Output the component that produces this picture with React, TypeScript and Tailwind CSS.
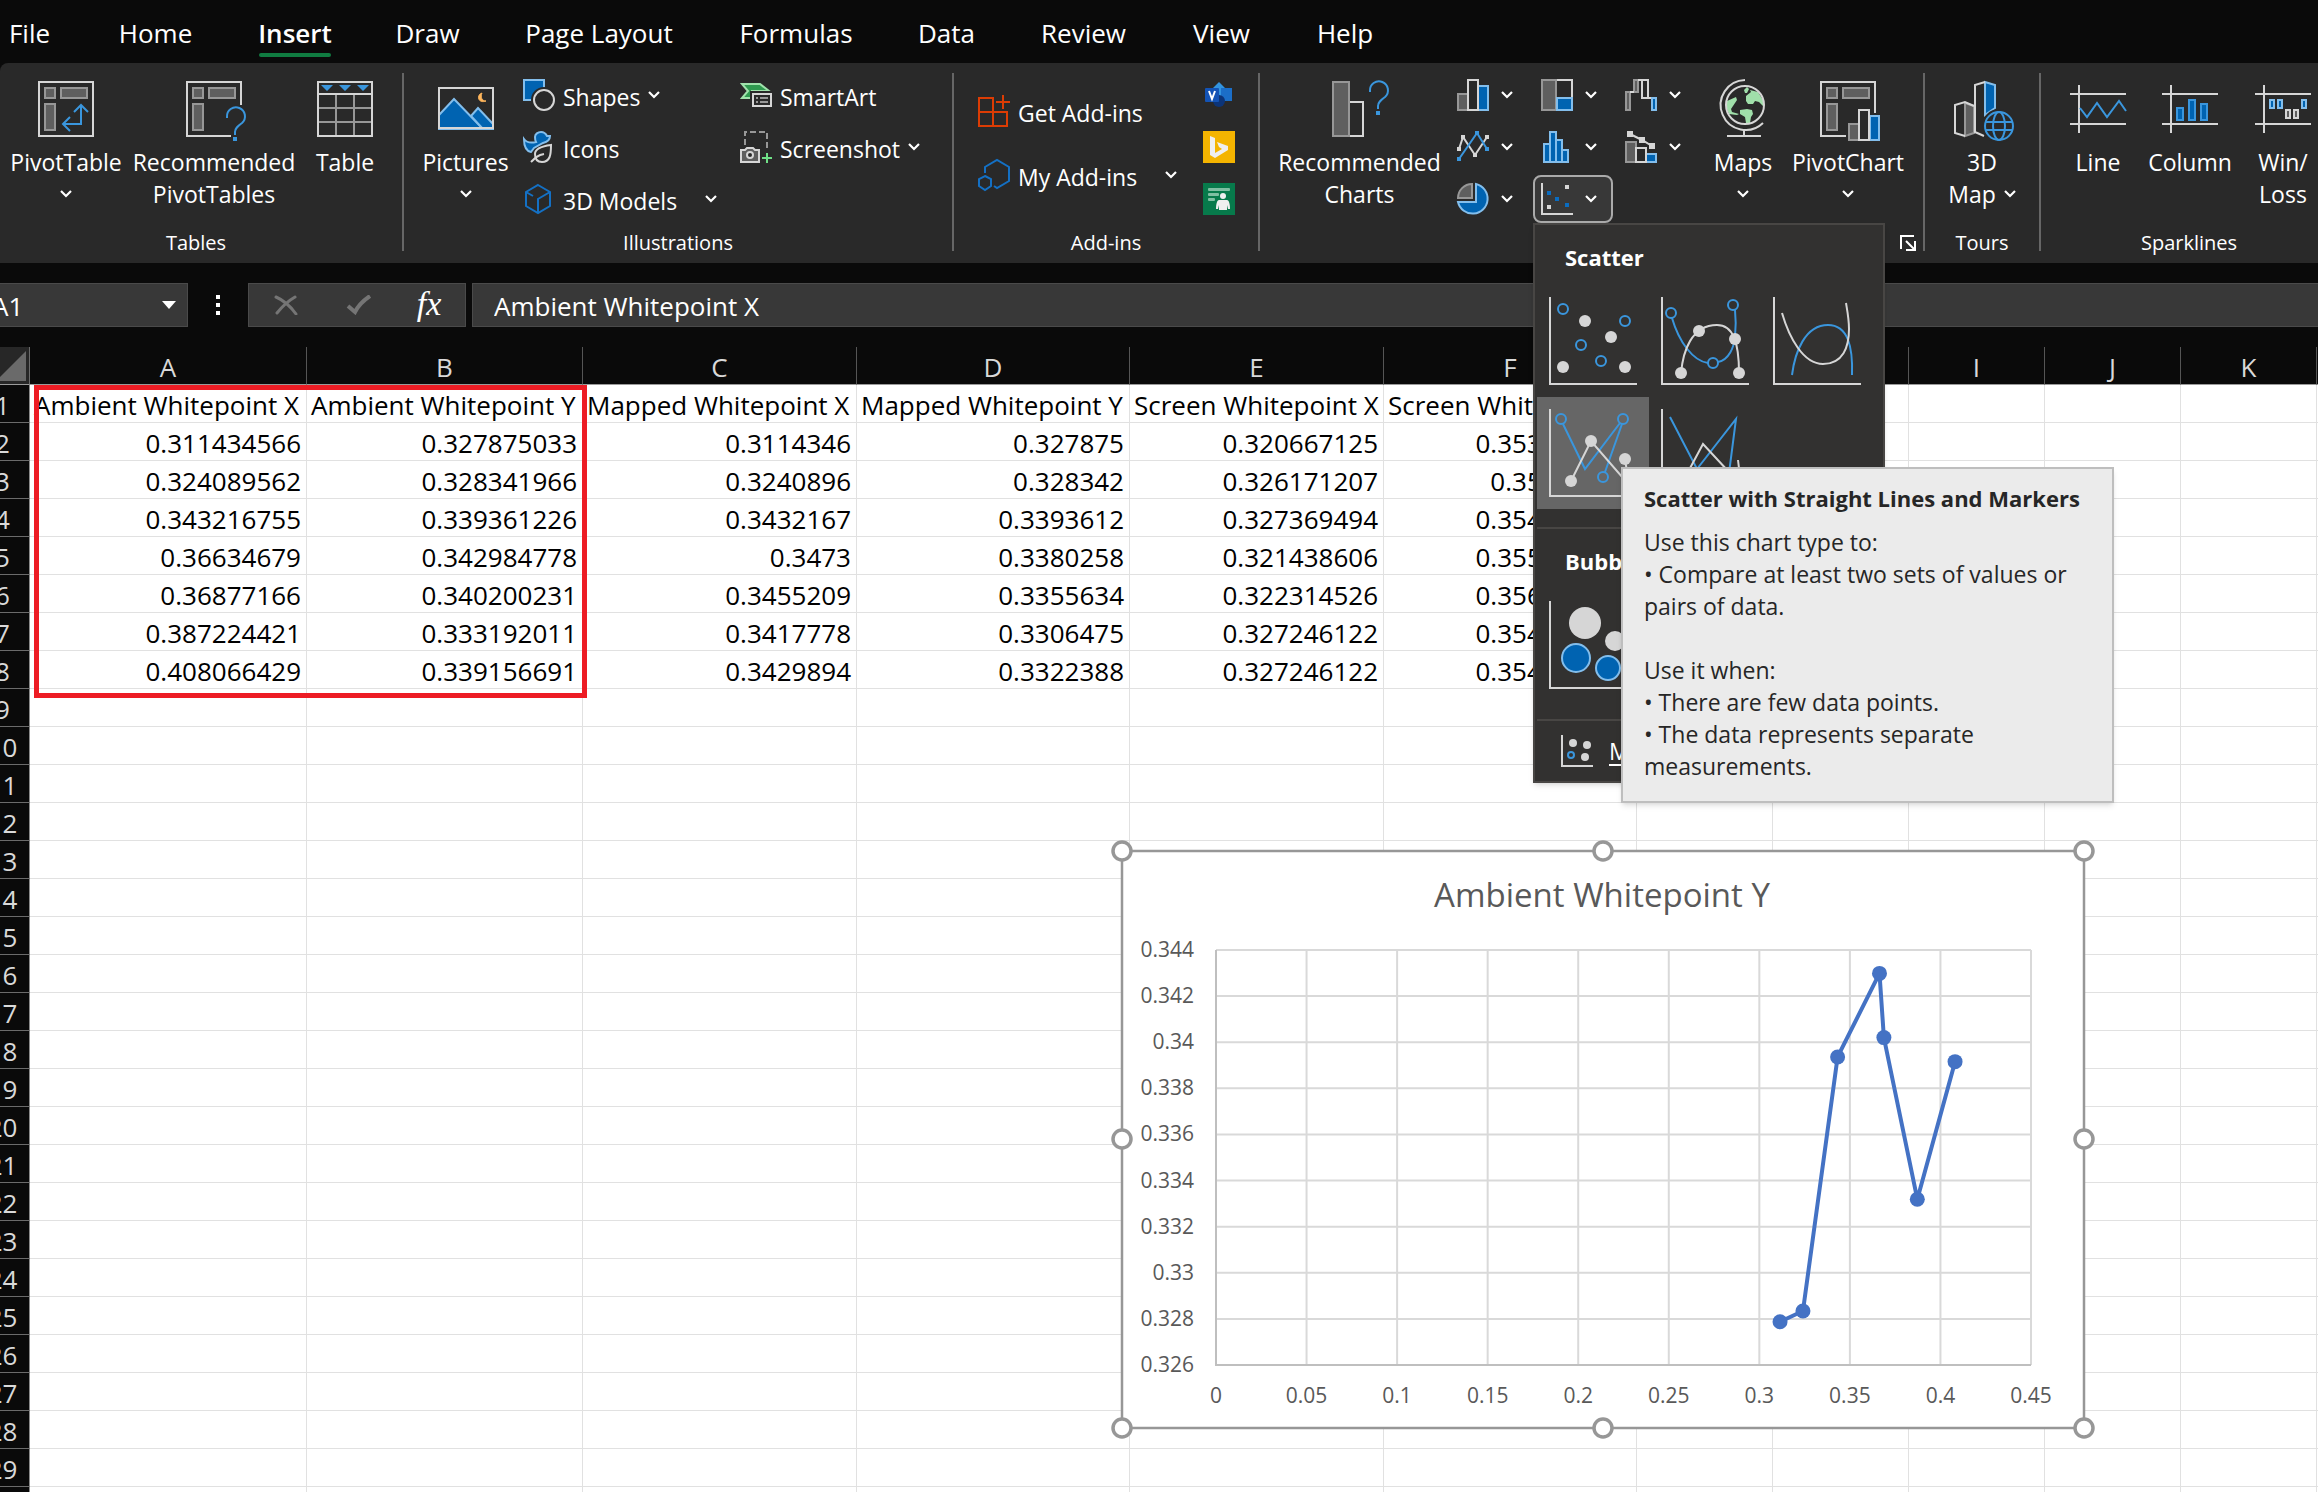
import React from "react";

const LIGHT = "#d6d6d6";
const GRAY = "#979797";
const GRAY_FILL = "#5f5f5f";
const BLUE = "#0063b1";
const PALE = "#83beec";
const MID = "#3a96dd";
const DEEP = "#1470c4";

/* ---------- helpers ---------- */

function Box({ x, y, w, h, s = LIGHT, f = "none" }: { x: number; y: number; w: number; h: number; s?: string; f?: string }) {
  return <rect x={x + 1} y={y + 1} width={w - 2} height={h - 2} stroke={s} fill={f} strokeWidth={2} />;
}

function Chevron({ className = "" }: { className?: string }) {
  return (
    <svg className={"h-2 w-3 shrink-0 " + className} viewBox="0 0 12 8" fill="none" stroke="#fff" strokeWidth={2.2}>
      <path d="M1 1l5 5 5-5" />
    </svg>
  );
}

function Big({ children }: { children: React.ReactNode }) {
  return (
    <svg className="h-[60px] w-14 shrink-0 overflow-visible" viewBox="0 0 56 60" fill="none" stroke={LIGHT} strokeWidth={2}>
      {children}
    </svg>
  );
}

function Small({ children }: { children: React.ReactNode }) {
  return (
    <svg className="h-8 w-8 shrink-0 overflow-visible" viewBox="0 0 32 32" fill="none" stroke={LIGHT} strokeWidth={2}>
      {children}
    </svg>
  );
}

function Question({ x, y }: { x: number; y: number }) {
  return (
    <g transform={`translate(${x} ${y})`}>
      <path d="M1 11V10A9 9 0 1 1 16 16C12 19 9 21 9 25V28" stroke={MID} />
      <rect x={7} y={30} width={4} height={4} fill={MID} stroke="none" />
    </g>
  );
}

/* ---------- large ribbon icons ---------- */

const pivotInner = (
  <>
    <Box x={6} y={6} w={12} h={12} s={GRAY} f={GRAY_FILL} />
    <Box x={22} y={6} w={28} h={12} s={GRAY} f={GRAY_FILL} />
    <Box x={6} y={22} w={12} h={28} s={GRAY} f={GRAY_FILL} />
  </>
);

const icons = {
  pivot: (
    <Big>
      <Box x={0} y={0} w={56} h={56} />
      {pivotInner}
      <path d="M43 24V43H26M36 31l7-7 7 7M32 36l-7 7 7 7" stroke={MID} />
    </Big>
  ),
  recPivot: (
    <Big>
      <path d="M55 24V1H1V55H45" />
      {pivotInner}
      <Question x={40} y={26} />
    </Big>
  ),
  table: (
    <Big>
      <path d="M19 14V55M37 14V55M1 27H55M1 41H55" stroke={GRAY} />
      <Box x={0} y={0} w={56} h={56} />
      <path d="M1 13H55" />
      <path d="M4 4H16L10 10ZM22 4H34L28 10ZM40 4H52L46 10Z" fill={MID} stroke="none" />
    </Big>
  ),
  pictures: (
    <Big>
      <path d="M1 34L16 18 45 48H1Z" fill={BLUE} stroke={PALE} />
      <path d="M33 35L40 27 55 43V48H45Z" fill={BLUE} stroke={PALE} />
      <Box x={0} y={6} w={56} h={42} />
      <path d="M44 12C38 14 40 23 48 20C44 20 42 16 44 12Z" fill="#ffb65c" stroke="#ffb65c" strokeWidth={1} />
    </Big>
  ),
  recCharts: (
    <Big>
      <Box x={16} y={20} w={16} h={36} />
      <Box x={0} y={0} w={18} h={56} s={GRAY} f={GRAY_FILL} />
      <Question x={37} y={0} />
    </Big>
  ),
  globe: (
    <Big>
      <g fill="#a0dfaa" stroke="none">
        <path d="M29 9L32 6 34 8 32 12 30 12Z" />
        <path d="M31 15L36 11 35 9 43 11 48 19 49 26 44 21 40 20 38 23 33 23 31 20Z" />
        <path d="M12 20L21 16 22 19 20 22 18 25 16 28 17 31 24 33 22 34 14 33 11 26Z" />
        <path d="M25 29L32 28 37 29 38 33 36 36 35 42 31 42 30 36 25 33Z" />
      </g>
      <circle cx={30} cy={24} r={19} />
      <path d="M30 -1A25 25 0 1 0 48 42M29 50V55M12 55H46" />
    </Big>
  ),
  pivotChart: (
    <Big>
      <path d="M55 32V1H1V55H26" />
      {pivotInner}
      <Box x={28} y={42} w={12} h={18} s={GRAY} f={GRAY_FILL} />
      <Box x={49} y={34} w={11} h={26} s={PALE} f={BLUE} />
      <Box x={38} y={28} w={12} h={32} f="#292929" />
    </Big>
  ),
  map3d: (
    <Big>
      <path d="M11 22L20 25V52L11 55Z" fill={GRAY_FILL} stroke={GRAY} />
      <path d="M20 25L11 21 1 24V52L11 55" />
      <path d="M31 1L41 4V27L31 34Z" fill={BLUE} stroke={PALE} />
      <path d="M31 1L21 4V51L30 55" />
      <g stroke={MID}>
        <circle cx={45} cy={45} r={17} fill="#292929" stroke="none" />
        <circle cx={45} cy={45} r={14} />
        <ellipse cx={45} cy={45} rx={6} ry={14} />
        <path d="M32 41H58M32 49H58" />
      </g>
    </Big>
  ),
  line: (
    <Big>
      <path d="M0 13H56M0 43H56M9 4V52" />
      <path d="M10 27L17 36 27 22 37 36 49 20 56 30" stroke={MID} />
    </Big>
  ),
  column: (
    <Big>
      <path d="M0 13H56M0 43H56M9 4V52" />
      <Box x={14} y={26} w={8} h={14} s={MID} f={BLUE} />
      <Box x={26} y={18} w={8} h={22} s={MID} f={BLUE} />
      <Box x={38} y={22} w={8} h={18} s={MID} f={BLUE} />
    </Big>
  ),
  winLoss: (
    <Big>
      <path d="M0 13H56M0 43H56M9 4V52" />
      <Box x={14} y={18} w={6} h={10} s={PALE} f={BLUE} />
      <Box x={22} y={18} w={6} h={10} s={PALE} f={BLUE} />
      <Box x={46} y={18} w={6} h={10} s={PALE} f={BLUE} />
      <Box x={30} y={28} w={6} h={10} f={GRAY_FILL} />
      <Box x={38} y={28} w={6} h={10} f={GRAY_FILL} />
    </Big>
  ),

  /* ---------- small ribbon icons ---------- */
  shapes: (
    <Small>
      <Box x={0} y={0} w={22} h={22} s={PALE} f={BLUE} />
      <circle cx={21} cy={21} r={13} fill="#292929" stroke="none" />
      <circle cx={21} cy={21} r={10} />
    </Small>
  ),
  duck: (
    <Small>
      <path d="M1 8C4 12 9 12 13 11C12 9 12 8 12 6C12 3 15 1 18 1C21 1 23 3 24 5L27 5C27 9 24 11 20 12L11 17 8 21C3 20 1 15 1 8Z" fill={BLUE} stroke={PALE} />
      <path d="M28 14C20 15 12 17 12 23C12 28 14 31 19 31C27 31 28 24 28 14Z" fill="#292929" />
      <path d="M8 31C12 27 15 24 21 23" />
    </Small>
  ),
  cube: (
    <Small>
      <path d="M15 2L27 9V23L15 30 3 23V9ZM3 9L10 13M27 9L15 16V30" stroke={DEEP} />
    </Small>
  ),
  smartArt: (
    <Small>
      <path d="M2 5H20L29 12H12V19H2L8 12Z" fill="#2f9a4f" stroke="#a0e2ab" />
      <rect x={10} y={12} width={24} height={18} fill="#292929" stroke="none" />
      <Box x={12} y={14} w={20} h={14} />
      <path d="M16 19H18M20 19H28M16 23H18M20 23H28" stroke={GRAY} />
    </Small>
  ),
  screenshot: (
    <Small>
      <path d="M5 14V1H27V20" stroke={GRAY} strokeDasharray="6 3" />
      <path d="M1 19H5L7 17H13L15 19H19V31H1Z" fill={GRAY_FILL} />
      <circle cx={10} cy={24} r={3} fill="#292929" />
      <path d="M27 22V32M22 27H32" stroke="#6fe087" />
    </Small>
  ),
  getAddins: (
    <Small>
      <path d="M1 3H15V31H1ZM1 17H29V31H15M25 0V14M18 7H32" stroke="#dc3c04" />
    </Small>
  ),
  myAddins: (
    <Small>
      <path d="M7 14V8L19 1 31 8V22L19 29 16 27M7 17L13 20V27L7 31 1 27V20Z" stroke={DEEP} />
    </Small>
  ),
  visio: (
    <Small>
      <path d="M16 3L24 11 16 19 8 11Z" fill="#3294e0" stroke="none" />
      <rect x={18} y={9} width={11} height={13} fill="#1b6ec8" stroke="none" />
      <circle cx={16} cy={22} r={6} fill="#0c3478" stroke="none" />
      <rect x={2} y={9} width={14} height={14} rx={1} fill="#1353b5" stroke="none" />
      <path d="M6 12L9 20 12 12" stroke="#fff" />
    </Small>
  ),
  bing: (
    <Small>
      <rect width={32} height={32} fill="#f4b400" stroke="none" />
      <path d="M7 5L12 7V22L19 18 16 16 14 11 25 15V19L12 27 7 24Z" fill="#efefef" stroke="none" />
    </Small>
  ),
  people: (
    <Small>
      <rect width={32} height={32} fill="#077a4b" stroke="none" />
      <g stroke="none" fill="#7fbfa2">
        <rect x={5} y={5} width={22} height={3} rx={1} />
        <rect x={5} y={10} width={11} height={3} rx={1} />
        <rect x={5} y={15} width={7} height={3} rx={1} />
      </g>
      <g stroke="none" fill="#efefef">
        <circle cx={20} cy={13} r={3} />
        <path d="M16 17H24C26 17 27 21 27 26H25L24 22V27H16V22L15 26H13C13 21 14 17 16 17Z" />
      </g>
    </Small>
  ),
  colChart: (
    <Small>
      <Box x={0} y={14} w={12} h={18} s={GRAY} f={GRAY_FILL} />
      <Box x={20} y={6} w={12} h={26} s={PALE} f={BLUE} />
      <Box x={10} y={0} w={12} h={32} f="#292929" />
    </Small>
  ),
  treemap: (
    <Small>
      <Box x={14} y={0} w={18} h={20} />
      <Box x={0} y={0} w={16} h={32} s={GRAY} f={GRAY_FILL} />
      <Box x={15} y={18} w={17} h={14} s={PALE} f={BLUE} />
    </Small>
  ),
  waterfall: (
    <Small>
      <Box x={0} y={12} w={6} h={20} s={GRAY} f={GRAY_FILL} />
      <Box x={8} y={0} w={6} h={14} s={GRAY} f={GRAY_FILL} />
      <path d="M5 13H9M13 1H17M23 19H27" />
      <Box x={16} y={0} w={8} h={20} />
      <Box x={26} y={18} w={6} h={14} s={PALE} f={BLUE} />
    </Small>
  ),
  lineChart: (
    <Small>
      <path d="M2 18L6 6 18 24 30 6" />
      <path d="M0 16h4v4H0zM4 4h4v4H4zM16 22h4v4h-4zM28 4h4v4h-4z" fill={LIGHT} stroke="none" />
      <path d="M2 28L20 2 30 18" stroke={MID} />
      <path d="M0 26h4v4H0zM18 0h4v4h-4zM28 16h4v4h-4z" fill={MID} stroke="none" />
    </Small>
  ),
  histogram: (
    <Small>
      <Box x={2} y={12} w={8} h={20} s={PALE} f={BLUE} />
      <Box x={14} y={8} w={8} h={24} s={PALE} f={BLUE} />
      <Box x={20} y={18} w={8} h={14} s={PALE} f={BLUE} />
      <Box x={8} y={0} w={8} h={32} s={PALE} f={BLUE} />
    </Small>
  ),
  combo: (
    <Small>
      <Box x={0} y={10} w={12} h={22} s={GRAY} f={GRAY_FILL} />
      <Box x={20} y={22} w={12} h={10} s={PALE} f={BLUE} />
      <Box x={10} y={16} w={12} h={16} f="#292929" />
      <path d="M5 3L17 9 27 15" />
      <path d="M2 0h6v6H2zM14 6h6v6h-6zM24 12h6v6h-6z" fill={LIGHT} stroke="none" />
    </Small>
  ),
  pie: (
    <Small>
      <path d="M15 1V15H1A14 14 0 0 1 15 1Z" fill={GRAY_FILL} stroke={GRAY} />
      <path d="M19 1A15 15 0 1 1 1 19H19Z" fill={BLUE} stroke={PALE} />
    </Small>
  ),
  scatter: (
    <Small>
      <path d="M1 0V31H32" />
      <path d="M24 2h4v4h-4zM6 22h4v4H6z" fill={LIGHT} stroke="none" />
      <path d="M6 8h4v4H6zM14 14h4v4h-4zM24 20h4v4h-4z" fill="#0a6cc0" stroke="none" />
    </Small>
  ),
  moreScatter: (
    <Small>
      <path d="M1 0V31H32" />
      <g fill={LIGHT} stroke="none">
        <circle cx={12} cy={8} r={4} />
        <circle cx={26} cy={10} r={4} />
        <circle cx={24} cy={22} r={4} />
      </g>
      <circle cx={10} cy={20} r={3} stroke={MID} />
    </Small>
  ),
};

/* ---------- gallery thumbnails ---------- */

function Thumb({ children }: { children: React.ReactNode }) {
  return (
    <svg className="h-[88px] w-[88px]" viewBox="0 0 88 88" fill="none" stroke={LIGHT} strokeWidth={2}>
      {children}
      <path d="M1 0V87H88" />
    </svg>
  );
}

function Dots({ at, ring }: { at: number[][]; ring?: boolean }) {
  return (
    <>
      {at.map(([x, y]) =>
        ring ? (
          <circle key={`${x},${y}`} cx={x} cy={y} r={5} stroke={MID} />
        ) : (
          <circle key={`${x},${y}`} cx={x} cy={y} r={6} fill={LIGHT} stroke="none" />
        )
      )}
    </>
  );
}

const thumbs = {
  markers: (
    <Thumb>
      <Dots ring at={[[14, 12], [76, 24], [32, 48], [52, 64]]} />
      <Dots at={[[36, 24], [62, 40], [14, 70], [76, 70]]} />
    </Thumb>
  ),
  smoothMarkers: (
    <Thumb>
      <path d="M11 21C18 45 32 64 47 66M57 65C68 63 73 50 74 40C75 30 75 22 74 13" stroke={MID} />
      <path d="M20 76C22 55 30 28 56 28C72 28 78 45 78 76" />
      <Dots ring at={[[10, 16], [72, 8], [52, 66]]} />
      <Dots at={[[38, 34], [74, 42], [20, 76], [78, 76]]} />
    </Thumb>
  ),
  smooth: (
    <Thumb>
      <path d="M19 78C22 55 32 28 55 28C75 28 80 50 79 78" stroke={MID} />
      <path d="M9 16C16 40 30 67 50 67C70 67 76 50 76 32C76 22 74 12 73 6" />
    </Thumb>
  ),
  straightMarkers: (
    <Thumb>
      <path d="M14 15L36 60 71 14M73 15L56 63" stroke={MID} />
      <path d="M22 72L42 32 80 76 76 50" />
      <Dots ring at={[[12, 10], [74, 10], [54, 68]]} />
      <Dots at={[[42, 32], [76, 50], [22, 72]]} />
    </Thumb>
  ),
  straight: (
    <Thumb>
      <path d="M9 8L36 60 75 10 67 72" stroke={MID} />
      <path d="M20 76L42 35 80 76 77 51" />
    </Thumb>
  ),
  bubble: (
    <Thumb>
      <circle cx={36} cy={22} r={16} fill={LIGHT} stroke="none" />
      <circle cx={66} cy={40} r={10} fill={LIGHT} stroke="none" />
      <circle cx={27} cy={57} r={14} fill={BLUE} stroke={PALE} />
      <circle cx={59} cy={67} r={12} fill={BLUE} stroke={PALE} />
    </Thumb>
  ),
};

/* ---------- ribbon ---------- */

const tabs: [string, string][] = [
  ["File", "w-[85px] pr-[26px]"],
  ["Home", "w-[141px]"],
  ["Insert", "w-[138px]"],
  ["Draw", "w-[127px]"],
  ["Page Layout", "w-[216px]"],
  ["Formulas", "w-[178px]"],
  ["Data", "w-[123px]"],
  ["Review", "w-[151px]"],
  ["View", "w-[125px]"],
  ["Help", "w-[122px]"],
];

function BigButton({ icon, lines, chevron, width }: { icon: React.ReactNode; lines: string[]; chevron?: "below" | "beside"; width: string }) {
  return (
    <button type="button" className={"flex shrink-0 flex-col items-center pt-[18px] text-[23px] leading-8 whitespace-nowrap " + width}>
      {icon}
      <span className="mt-[5px] flex flex-col items-center">
        {lines.map((l, i) => (
          <span key={l} className="flex items-center gap-2">
            {l}
            {chevron === "beside" && i === lines.length - 1 && <Chevron />}
          </span>
        ))}
      </span>
      {chevron === "below" && <Chevron className="mt-3" />}
    </button>
  );
}

function RowButton({ icon, text, chevron, height = "h-[52px]" }: { icon: React.ReactNode; text?: string; chevron?: "near" | "far"; height?: string }) {
  return (
    <button type="button" className={"flex items-center gap-2 text-[23px] leading-8 whitespace-nowrap " + height}>
      {icon}
      {text && <span className="pt-[3px]">{text}</span>}
      {chevron === "near" && <Chevron />}
      {chevron === "far" && <Chevron className="ml-5" />}
    </button>
  );
}

function Group({ label, width, children, labelClass = "" }: { label: string; width: string; children: React.ReactNode; labelClass?: string }) {
  return (
    <section aria-label={label} className={"relative flex h-[200px] shrink-0 flex-col justify-between pb-2 " + width}>
      <div className="flex items-start">{children}</div>
      <div className={"text-center text-[20px] leading-6 " + labelClass}>{label}</div>
    </section>
  );
}

function Divider() {
  return <div className="mt-[10px] mb-3 w-[2px] shrink-0 bg-[#666]" />;
}

function ChartPick({ icon, label, active, children }: { icon: React.ReactNode; label: string; active?: boolean; children?: React.ReactNode }) {
  return (
    <div className="relative">
      <button
        type="button"
        aria-label={label}
        className={
          active
            ? "flex h-12 w-20 items-center gap-3 rounded-lg border-2 border-[#aaa] bg-[#383838] pl-[6px]"
            : "flex h-12 w-20 items-center gap-3 rounded-lg pl-2"
        }
      >
        {icon}
        <Chevron />
      </button>
      {children}
    </div>
  );
}

function Thumbnail({ label, active, children, tip }: { label: string; active?: boolean; children: React.ReactNode; tip?: React.ReactNode }) {
  return (
    <div className="relative">
      <button type="button" aria-label={label} className={active ? "flex h-28 w-28 items-center justify-center bg-[#666]" : "flex h-28 w-28 items-center justify-center"}>
        {children}
      </button>
      {tip}
    </div>
  );
}

function Tooltip() {
  return (
    <div role="tooltip" className="absolute top-[70px] left-[84px] z-20 w-[493px] border-2 border-[#bebebe] bg-[#ebebeb] px-[21px] pt-[13px] pb-[19px] text-[23px] leading-8 text-[#262626] shadow-md">
      <p className="mb-3 text-[22px] font-bold whitespace-nowrap">Scatter with Straight Lines and Markers</p>
      <p>Use this chart type to:</p>
      <p>• Compare at least two sets of values or pairs of data.</p>
      <p className="mt-8">Use it when:</p>
      <p>• There are few data points.</p>
      <p>• The data represents separate measurements.</p>
    </div>
  );
}

function ScatterMenu() {
  return (
    <div className="absolute top-full left-0 z-10 w-[352px] border-2 border-[#484644] bg-[#323130] px-[2px] text-[23px] leading-8 shadow-md">
      <h3 className="pt-4 pb-3 pl-7 text-[22px] font-bold">Scatter</h3>
      <div className="grid grid-cols-[112px_112px_112px]">
        <Thumbnail label="Scatter">{thumbs.markers}</Thumbnail>
        <Thumbnail label="Scatter with Smooth Lines and Markers">{thumbs.smoothMarkers}</Thumbnail>
        <Thumbnail label="Scatter with Smooth Lines">{thumbs.smooth}</Thumbnail>
        <Thumbnail label="Scatter with Straight Lines and Markers" active tip={<Tooltip />}>
          {thumbs.straightMarkers}
        </Thumbnail>
        <Thumbnail label="Scatter with Straight Lines">{thumbs.straight}</Thumbnail>
      </div>
      <div className="mt-[18px] h-[2px] bg-[#484644]" />
      <h3 className="pt-4 pb-3 pl-7 text-[22px] font-bold">Bubble</h3>
      <Thumbnail label="Bubble">{thumbs.bubble}</Thumbnail>
      <div className="mt-[18px] h-[2px] bg-[#484644]" />
      <button type="button" className="flex h-[60px] w-full items-center gap-4 pl-6 whitespace-nowrap">
        {icons.moreScatter}
        <span>
          <span className="underline underline-offset-4">M</span>ore Scatter Charts...
        </span>
      </button>
    </div>
  );
}

function Ribbon() {
  return (
    <div className="relative z-30 flex h-[200px] rounded-tl-lg bg-[#292929]">
      <Group label="Tables" width="w-[402px] pl-[6px]" labelClass="pr-4">
        <BigButton icon={icons.pivot} lines={["PivotTable"]} chevron="below" width="w-[120px]" />
        <BigButton icon={icons.recPivot} lines={["Recommended", "PivotTables"]} width="w-[176px]" />
        <BigButton icon={icons.table} lines={["Table"]} width="w-[86px]" />
      </Group>
      <Divider />
      <Group label="Illustrations" width="w-[548px]">
        <BigButton icon={icons.pictures} lines={["Pictures"]} chevron="below" width="w-[119px] pl-1" />
        <div className="flex w-[217px] flex-col items-start pt-[6px]">
          <RowButton icon={icons.shapes} text="Shapes" chevron="near" />
          <RowButton icon={icons.duck} text="Icons" />
          <RowButton icon={icons.cube} text="3D Models" chevron="far" />
        </div>
        <div className="flex flex-col items-start pt-[6px]">
          <RowButton icon={icons.smartArt} text="SmartArt" />
          <RowButton icon={icons.screenshot} text="Screenshot" chevron="near" />
        </div>
      </Group>
      <Divider />
      <Group label="Add-ins" width="w-[304px]">
        <div className="flex w-[249px] flex-col items-start pt-4 pl-6">
          <RowButton icon={icons.getAddins} text="Get Add-ins" height="h-16" />
          <RowButton icon={icons.myAddins} text="My Add-ins" chevron="far" height="h-16" />
        </div>
        <div className="flex flex-col pt-[6px]">
          <RowButton icon={icons.visio} />
          <RowButton icon={icons.bing} />
          <RowButton icon={icons.people} />
        </div>
      </Group>
      <Divider />
      <Group label="Charts" width="w-[663px]">
        <BigButton icon={icons.recCharts} lines={["Recommended", "Charts"]} width="w-[189px] pl-[10px]" />
        <div className="grid grid-cols-[80px_80px_80px] gap-1 pt-2">
          <ChartPick icon={icons.colChart} label="Column or bar chart" />
          <ChartPick icon={icons.treemap} label="Hierarchy chart" />
          <ChartPick icon={icons.waterfall} label="Waterfall chart" />
          <ChartPick icon={icons.lineChart} label="Line or area chart" />
          <ChartPick icon={icons.histogram} label="Statistic chart" />
          <ChartPick icon={icons.combo} label="Combo chart" />
          <ChartPick icon={icons.pie} label="Pie or doughnut chart" />
          <ChartPick icon={icons.scatter} label="Scatter or bubble chart" active>
            <ScatterMenu />
          </ChartPick>
        </div>
        <BigButton icon={icons.globe} lines={["Maps"]} chevron="below" width="w-[92px]" />
        <BigButton icon={icons.pivotChart} lines={["PivotChart"]} chevron="below" width="w-[118px]" />
        <button type="button" aria-label="Chart options" className="absolute right-[7px] bottom-3">
          <svg className="h-4 w-4" viewBox="0 0 16 16" fill="none" stroke="#fff" strokeWidth={2}>
            <path d="M1 14V1H14M6 6L14 14M15 6V15H6" />
          </svg>
        </button>
      </Group>
      <Divider />
      <Group label="Tours" width="w-[114px]">
        <BigButton icon={icons.map3d} lines={["3D", "Map"]} chevron="beside" width="w-[114px]" />
      </Group>
      <Divider />
      <Group label="Sparklines" width="w-[296px]">
        <BigButton icon={icons.line} lines={["Line"]} width="w-[114px]" />
        <BigButton icon={icons.column} lines={["Column"]} width="w-[70px]" />
        <BigButton icon={icons.winLoss} lines={["Win/", "Loss"]} width="w-[116px]" />
      </Group>
    </div>
  );
}

/* ---------- formula bar ---------- */

function FormulaBar() {
  return (
    <div className="flex h-[84px] items-start pt-5 text-[26px] leading-9 text-white">
      <div className="flex h-11 w-[188px] shrink-0 items-center border border-l-0 border-[#4a4a4a] bg-[#383838]">
        <input aria-label="Name box" readOnly value="A1" className="-ml-2 w-[170px] bg-transparent pt-[2px] outline-none" />
        <svg className="h-[9px] w-[14px] shrink-0" viewBox="0 0 14 9" fill="#fff">
          <path d="M0 0H14L7 8Z" />
        </svg>
      </div>
      <div className="flex h-11 w-[60px] shrink-0 flex-col items-center justify-center gap-1">
        <span className="h-1 w-1 bg-white" />
        <span className="h-1 w-1 bg-white" />
        <span className="h-1 w-1 bg-white" />
      </div>
      <div className="mr-[6px] flex h-11 w-[218px] shrink-0 items-center border border-[#4a4a4a] bg-[#383838]">
        <button type="button" aria-label="Cancel" className="flex w-[73px] justify-center">
          <svg className="h-5 w-6" viewBox="0 0 24 20" fill="none" stroke="#757575" strokeWidth={3} strokeLinecap="round">
            <path d="M2 2C9 5 17 12 22 19M21 2C14 6 7 13 3 18" />
          </svg>
        </button>
        <button type="button" aria-label="Enter" className="flex w-[73px] justify-center">
          <svg className="h-5 w-[26px]" viewBox="0 0 26 20" fill="none" stroke="#757575" strokeWidth={4}>
            <path d="M2 11L9 17C12 11 18 5 24 1" />
          </svg>
        </button>
        <button type="button" aria-label="Insert function" className="w-[68px] pb-[2px] text-center font-['Liberation_Serif',serif] text-[34px] leading-9 italic">
          fx
        </button>
      </div>
      <input
        aria-label="Formula"
        readOnly
        value="Ambient Whitepoint X"
        className="h-11 min-w-0 flex-1 border border-r-0 border-[#4a4a4a] bg-[#383838] pt-[2px] pl-[21px] outline-none"
      />
    </div>
  );
}

/* ---------- sheet ---------- */

const columns: [string, string][] = [
  ["A", "w-[277px]"],
  ["B", "w-[276px]"],
  ["C", "w-[274px]"],
  ["D", "w-[273px]"],
  ["E", "w-[254px]"],
  ["F", "w-[253px]"],
  ["G", "w-[136px]"],
  ["H", "w-[136px]"],
  ["I", "w-[136px]"],
  ["J", "w-[136px]"],
  ["K", "w-[136px]"],
  ["L", "w-[136px]"],
];

const data: string[][] = [
  ["Ambient Whitepoint X", "Ambient Whitepoint Y", "Mapped Whitepoint X", "Mapped Whitepoint Y", "Screen Whitepoint X", "Screen Whitepoint Y"],
  ["0.311434566", "0.327875033", "0.3114346", "0.327875", "0.320667125", "0.353182942"],
  ["0.324089562", "0.328341966", "0.3240896", "0.328342", "0.326171207", "0.35318294"],
  ["0.343216755", "0.339361226", "0.3432167", "0.3393612", "0.327369494", "0.354297251"],
  ["0.36634679", "0.342984778", "0.3473", "0.3380258", "0.321438606", "0.355182942"],
  ["0.36877166", "0.340200231", "0.3455209", "0.3355634", "0.322314526", "0.356297251"],
  ["0.387224421", "0.333192011", "0.3417778", "0.3306475", "0.327246122", "0.354182942"],
  ["0.408066429", "0.339156691", "0.3429894", "0.3322388", "0.327246122", "0.354182942"],
];

const rows = Array.from({ length: 30 }, (_, i) => i + 1);

function Sheet() {
  return (
    <table className="-ml-6 w-[2477px] table-fixed border-separate border-spacing-0 text-[26px] leading-[34px] text-black">
      <colgroup>
        <col className="w-[54px]" />
        {columns.map(([name, w]) => (
          <col key={name} className={w} />
        ))}
      </colgroup>
      <thead>
        <tr className="text-[#d9d9d9]">
          <td className="h-[38px] border-r border-b border-r-[#6b6b6b] border-b-[#9b9b9b] bg-[#272727] p-0">
            <svg className="ml-auto mr-[3px] block h-[30px] w-[30px]" viewBox="0 0 30 30" fill="#6a6a6a">
              <path d="M30 0V30H0Z" />
            </svg>
          </td>
          {columns.map(([name]) => (
            <th key={name} scope="col" className="h-[38px] border-r border-b border-r-[#555] border-b-[#9b9b9b] bg-[#0a0a0a] px-0 pt-[3px] pb-0 font-normal">
              {name}
            </th>
          ))}
        </tr>
      </thead>
      <tbody>
        {rows.map((n) => (
          <tr key={n}>
            <th scope="row" className="h-[38px] border-r border-b border-r-[#8a8a8a] border-b-[#6b6b6b] bg-[#0a0a0a] px-0 pt-[3px] pb-0 font-normal text-[#d9d9d9]">
              {n}
            </th>
            {columns.map(([name], c) => (
              <td
                key={name}
                className={
                  n === 1
                    ? "h-[38px] overflow-hidden border-r border-b border-[#e1e1e1] bg-white px-1 pt-[3px] pb-0 whitespace-nowrap"
                    : "h-[38px] overflow-hidden border-r border-b border-[#e1e1e1] bg-white pt-[3px] pr-[5px] pb-0 pl-1 text-right whitespace-nowrap"
                }
              >
                {data[n - 1]?.[c]}
              </td>
            ))}
          </tr>
        ))}
      </tbody>
    </table>
  );
}

/* ---------- embedded chart ---------- */

const points = data.slice(1).map((r) => [Number(r[0]), Number(r[1])]);
const px = (v: number) => 106 + (v / 0.45) * 815;
const py = (v: number) => 110 + ((0.344 - v) / 0.018) * 415;
const xTicks = [0, 0.05, 0.1, 0.15, 0.2, 0.25, 0.3, 0.35, 0.4, 0.45];
const yTicks = [0.344, 0.342, 0.34, 0.338, 0.336, 0.334, 0.332, 0.33, 0.328, 0.326];

function Chart() {
  return (
    <svg
      role="img"
      aria-label="Ambient Whitepoint Y"
      className="absolute top-[493px] left-[1110px] h-[600px] w-[985px] font-['Open_Sans',sans-serif]"
      viewBox="0 0 985 600"
    >
      <rect x={12} y={11} width={962} height={577} fill="#fff" stroke="#979797" strokeWidth={2.5} />
      <text x={492} y={67} textAnchor="middle" fontSize={33} fill="#595959">
        Ambient Whitepoint Y
      </text>
      <g stroke="#d9d9d9" strokeWidth={2}>
        {xTicks.map((t) => (
          <path key={t} d={`M${px(t)} 110V525`} />
        ))}
        {yTicks.map((t) => (
          <path key={t} d={`M106 ${py(t)}H921`} />
        ))}
      </g>
      <path d="M106 110V525H921" fill="none" stroke="#bfbfbf" strokeWidth={2} />
      <g fontSize={21} fill="#595959">
        {xTicks.map((t) => (
          <text key={t} x={px(t)} y={563} textAnchor="middle">
            {t}
          </text>
        ))}
        {yTicks.map((t) => (
          <text key={t} x={84} y={py(t) + 7} textAnchor="end">
            {t}
          </text>
        ))}
      </g>
      <polyline points={points.map(([x, y]) => `${px(x)},${py(y)}`).join(" ")} fill="none" stroke="#4472c4" strokeWidth={4} strokeLinejoin="round" />
      {points.map(([x, y]) => (
        <circle key={x} cx={px(x)} cy={py(y)} r={7.5} fill="#4472c4" />
      ))}
      <g fill="#fff" stroke="#979797" strokeWidth={3.5}>
        {[[12, 11], [493, 11], [974, 11], [12, 299], [974, 299], [12, 588], [493, 588], [974, 588]].map(([x, y]) => (
          <circle key={`${x},${y}`} cx={x} cy={y} r={9} />
        ))}
      </g>
    </svg>
  );
}

export default function App() {
  return (
    <div className="flex h-screen flex-col overflow-hidden bg-[#0a0a0a] font-['Open_Sans',sans-serif] text-white">
      <nav className="flex h-[63px] shrink-0 pt-1 text-[26px]">
        {tabs.map(([name, w]) => (
          <button key={name} type="button" className={"relative shrink-0 text-center whitespace-nowrap " + w + (name === "Insert" ? " font-semibold" : "")}>
            {name}
            {name === "Insert" && <span className="absolute bottom-[6px] left-[33px] h-1 w-[72px] rounded-full bg-[#107c41]" />}
          </button>
        ))}
      </nav>
      <Ribbon />
      <FormulaBar />
      <main className="relative min-h-0 flex-1 overflow-hidden">
        <Sheet />
        <div className="absolute top-[38px] left-[34px] h-[313px] w-[553px] border-[5px] border-[#ed1c24]" />
        <Chart />
      </main>
    </div>
  );
}
